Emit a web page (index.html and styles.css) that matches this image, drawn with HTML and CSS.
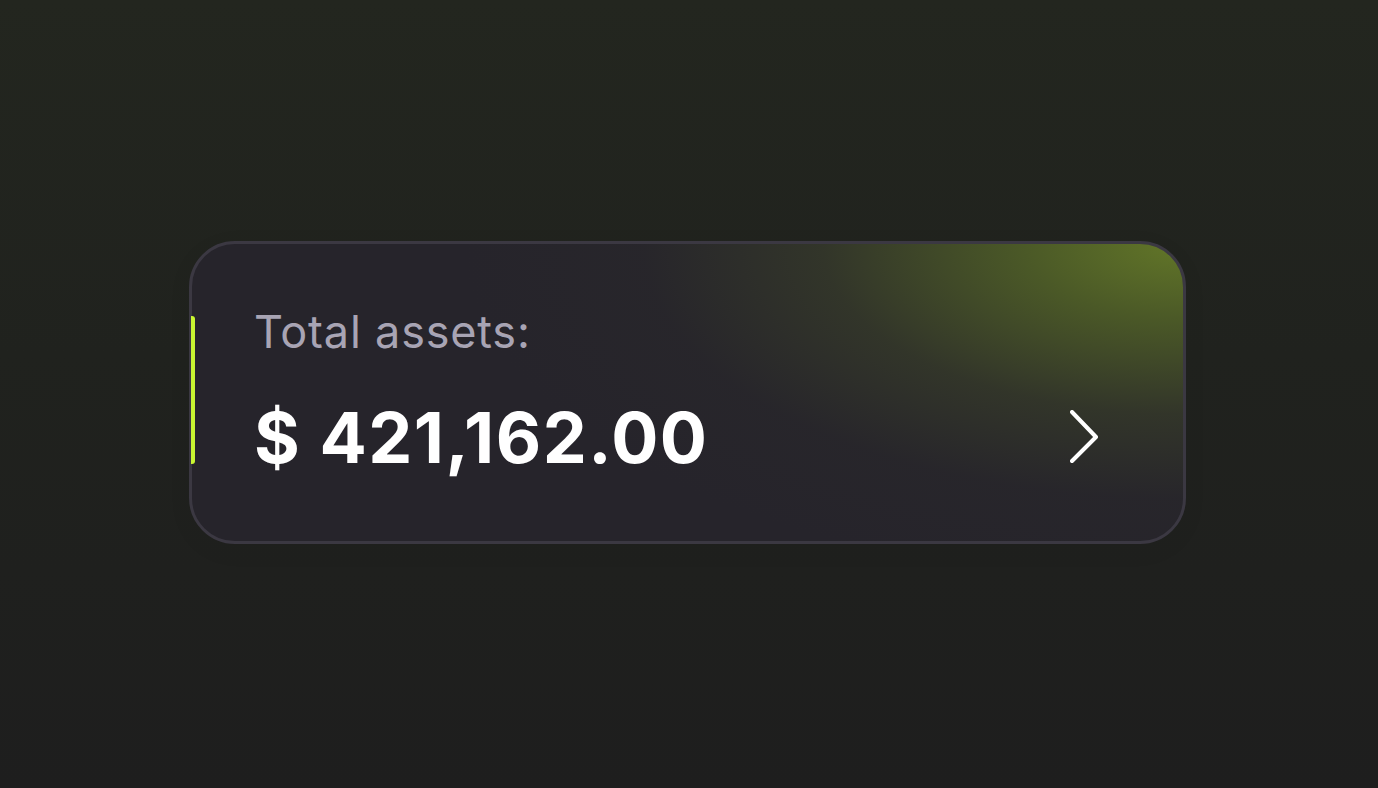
FILE: index.html
```html
<!DOCTYPE html>
<html lang="en">
	<head>
		<meta charset="UTF-8" />
		<meta name="viewport" content="width=device-width, initial-scale=1.0" />
		<title>Total assets</title>
		<link rel="stylesheet" href="styles.css">
	</head>
	<body>
		<div class="assets-card">
			<div class="accent-bar"></div>
			<div class="assets-label">Total assets:</div>
			<div class="assets-row">
				<div class="assets-value">$ 421,162.00</div>
				<svg class="chevron" width="32" height="56" viewBox="0 0 32 56" fill="none">
					<path d="M2 2 L26 27 L2 51" stroke="#ffffff" stroke-width="4" stroke-linecap="round" stroke-linejoin="round" />
				</svg>
			</div>
		</div>
	</body>
</html>
```

FILE: styles.css
```css
* {
	margin: 0;
	padding: 0;
	box-sizing: border-box;
}

body {
	font-family: 'Inter', 'Noto Sans', sans-serif;
	background: linear-gradient(180deg, #23261f 0%, #20221e 45%, #1e1e1e 100%);
	min-height: 100vh;
	padding: 0 3px 3px 0;
	display: flex;
	align-items: center;
	justify-content: center;
}

.assets-card {
	position: relative;
	width: 997px;
	height: 303px;
	border: 3px solid #3b3842;
	border-radius: 46px;
	padding: 65px 81px 0 62px;
	background:
		radial-gradient(ellipse 720px 340px at 100% 0%, rgba(98, 118, 40, 1) 0%, rgba(84, 102, 38, 0.8) 22%, rgba(62, 70, 40, 0.5) 50%, rgba(45, 45, 42, 0.2) 75%, rgba(38, 36, 43, 0) 100%),
		#26242b;
	box-shadow: 0 6px 24px rgba(0, 0, 0, 0.05);
}

.accent-bar {
	position: absolute;
	left: -1px;
	top: 72px;
	width: 4px;
	height: 148px;
	background: #c8f531;
	border-radius: 0 3px 3px 0;
}

.assets-label {
	font-size: 45px;
	line-height: 1;
	font-weight: 400;
	letter-spacing: 0.8px;
	color: #a8a4b4;
}

.assets-row {
	margin-top: 49px;
	display: flex;
	align-items: center;
	justify-content: space-between;
}

.assets-value {
	font-size: 70px;
	line-height: 1;
	font-weight: 700;
	letter-spacing: 1.5px;
	color: #ffffff;
}

.chevron {
	display: block;
	flex-shrink: 0;
}
```
